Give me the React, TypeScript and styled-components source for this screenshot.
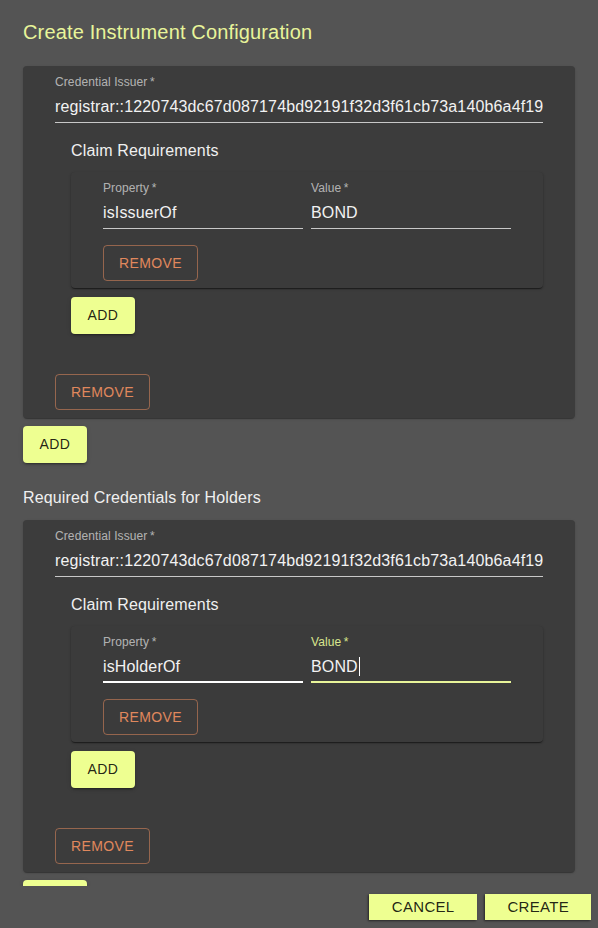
import React from "react";
import styled, { createGlobalStyle } from "styled-components";

const PRIMARY = "#eeff91";
const ACCENT = "#e8f59a";
const ERROR = "#e0885d";

const GlobalStyle = createGlobalStyle`
  html, body {
    margin: 0;
    padding: 0;
    background: #545454;
  }
  body {
    font-family: "Liberation Sans", Arial, Helvetica, sans-serif;
    color: #f0f0f0;
  }
  * { box-sizing: border-box; }
`;

const ISSUER = "registrar::1220743dc67d087174bd92191f32d3f61cb73a140b6a4f19e3a9c1d07b55e2f8a4";

type FieldState = "idle" | "hover" | "focus";

const TextField = ({ label, value, state = "idle", width }: { label: string; value: string; state?: FieldState; width?: number }) => (
  <Field $width={width}>
    <Label $focus={state === "focus"}>{label}{"\u2009*"}</Label>
    <InputBox $state={state}>
      <InputText>
        {value}
        {state === "focus" && <Caret />}
      </InputText>
    </InputBox>
  </Field>
);

const CredentialBlock = ({ property, focused }: { property: string; focused?: boolean }) => (
  <Card>
    <TextField label="Credential Issuer" value={ISSUER} />
    <SubTitle>Claim Requirements</SubTitle>
    <ClaimCard>
      <FieldRow>
        <TextField label="Property" value={property} width={200} state={focused ? "hover" : "idle"} />
        <TextField label="Value" value="BOND" width={200} state={focused ? "focus" : "idle"} />
      </FieldRow>
      <RemoveButton $top={16}>Remove</RemoveButton>
    </ClaimCard>
    <AddButton $top={9} $left={16}>Add</AddButton>
    <RemoveButton $top={40}>Remove</RemoveButton>
  </Card>
);

const App = () => (
  <>
    <GlobalStyle />
    <Page>
      <Title>Create Instrument Configuration</Title>
      <Content>
        <CredentialBlock property="isIssuerOf" />
        <AddButton $top={8}>Add</AddButton>
        <SectionHeading>Required Credentials for Holders</SectionHeading>
        <CredentialBlock property="isHolderOf" focused />
        <AddButton $top={8}>Add</AddButton>
      </Content>
      <Actions>
        <ActionButton $pad={23}>Cancel</ActionButton>
        <ActionButton $pad={22}>Create</ActionButton>
      </Actions>
    </Page>
  </>
);

export default App;

const Page = styled.div`
  display: flex;
  flex-direction: column;
  height: 928px;
  width: 598px;
  background: #545454;
`;

const Title = styled.h2`
  margin: 0;
  padding: 16px 23px;
  font: 400 20px/32px "Liberation Sans", Arial, sans-serif;
  letter-spacing: 0.15px;
  color: ${ACCENT};
`;

const Content = styled.div`
  flex: 1;
  min-height: 0;
  overflow: hidden;
  padding: 2px 23px 0;
  display: flex;
  flex-direction: column;
  align-items: flex-start;
`;

const Card = styled.div`
  align-self: stretch;
  display: flex;
  flex-direction: column;
  align-items: flex-start;
  padding: 9px 32px 8px;
  background: #3c3c3c;
  border-radius: 4px;
  box-shadow: 0 2px 1px -1px rgba(0, 0, 0, 0.2), 0 1px 1px 0 rgba(0, 0, 0, 0.14), 0 1px 3px 0 rgba(0, 0, 0, 0.12);
`;

const ClaimCard = styled(Card)`
  margin: 9px 0 0 16px;
  padding: 9px 32px 7px;
  background: #3b3b3b;
  box-shadow: 0 2px 1px -1px rgba(0, 0, 0, 0.3), 0 1px 1px 0 rgba(0, 0, 0, 0.2), 0 1px 3px 0 rgba(0, 0, 0, 0.2);
`;

const FieldRow = styled.div`
  display: flex;
  gap: 8px;
`;

const Field = styled.div<{ $width?: number }>`
  display: flex;
  flex-direction: column;
  width: ${p => (p.$width ? `${p.$width}px` : "100%")};
`;

const Label = styled.div<{ $focus?: boolean }>`
  height: 16px;
  font-size: 12px;
  line-height: 14px;
  letter-spacing: 0.1px;
  color: ${p => (p.$focus ? "#d9e68e" : "rgba(255, 255, 255, 0.62)")};
`;

const InputBox = styled.div<{ $state: FieldState }>`
  height: 32px;
  padding: 4px 0 ${p => (p.$state === "idle" ? 4 : 3)}px;
  border-bottom: ${p => (p.$state === "idle" ? 1 : 2)}px solid
    ${p => (p.$state === "focus" ? ACCENT : p.$state === "hover" ? "#ffffff" : "rgba(255, 255, 255, 0.72)")};
`;

const InputText = styled.div`
  font-size: 16px;
  line-height: 23px;
  letter-spacing: 0.15px;
  color: #f2f2f2;
  white-space: nowrap;
  overflow: hidden;
`;

const Caret = styled.span`
  display: inline-block;
  width: 1px;
  height: 19px;
  margin-left: 1px;
  vertical-align: -4px;
  background: #ffffff;
`;

const SubTitle = styled.div`
  margin: 16px 0 0 16px;
  font-size: 16px;
  line-height: 24px;
  letter-spacing: 0.15px;
  color: #f0f0f0;
`;

const SectionHeading = styled.div`
  margin: 23px 0 10px;
  font-size: 16px;
  line-height: 24px;
  letter-spacing: 0.15px;
  color: #f0f0f0;
`;

const BaseButton = styled.button`
  font-family: "Liberation Sans", Arial, sans-serif;
  font-size: 14px;
  font-weight: 500;
  line-height: 24px;
  letter-spacing: 0.4px;
  text-transform: uppercase;
  min-width: 64px;
  border-radius: 4px;
  cursor: pointer;
`;

const AddButton = styled(BaseButton)<{ $top?: number; $left?: number }>`
  margin: ${p => p.$top ?? 0}px 0 0 ${p => p.$left ?? 0}px;
  padding: 6px 16px 7px;
  border: none;
  background: ${PRIMARY};
  color: rgba(0, 0, 0, 0.87);
  box-shadow: 0 3px 1px -2px rgba(0, 0, 0, 0.2), 0 2px 2px 0 rgba(0, 0, 0, 0.14), 0 1px 5px 0 rgba(0, 0, 0, 0.12);
  flex-shrink: 0;
`;

const RemoveButton = styled(BaseButton)<{ $top?: number }>`
  margin-top: ${p => p.$top ?? 0}px;
  padding: 5px 15px;
  background: transparent;
  border: 1px solid rgba(224, 136, 93, 0.55);
  color: ${ERROR};
`;

const Actions = styled.div`
  display: flex;
  justify-content: flex-end;
  gap: 8px;
  padding: 8px 7px 8px;
`;

const ActionButton = styled.button<{ $pad: number }>`
  height: 26px;
  padding: 0 ${p => p.$pad}px;
  border: none;
  border-radius: 0;
  background: ${PRIMARY};
  color: rgba(0, 0, 0, 0.87);
  font: 400 15px/26px "Liberation Sans", Arial, sans-serif;
  letter-spacing: 0.3px;
  text-transform: uppercase;
  box-shadow: -1px 1px 2px rgba(0, 0, 0, 0.55);
  cursor: pointer;
`;
